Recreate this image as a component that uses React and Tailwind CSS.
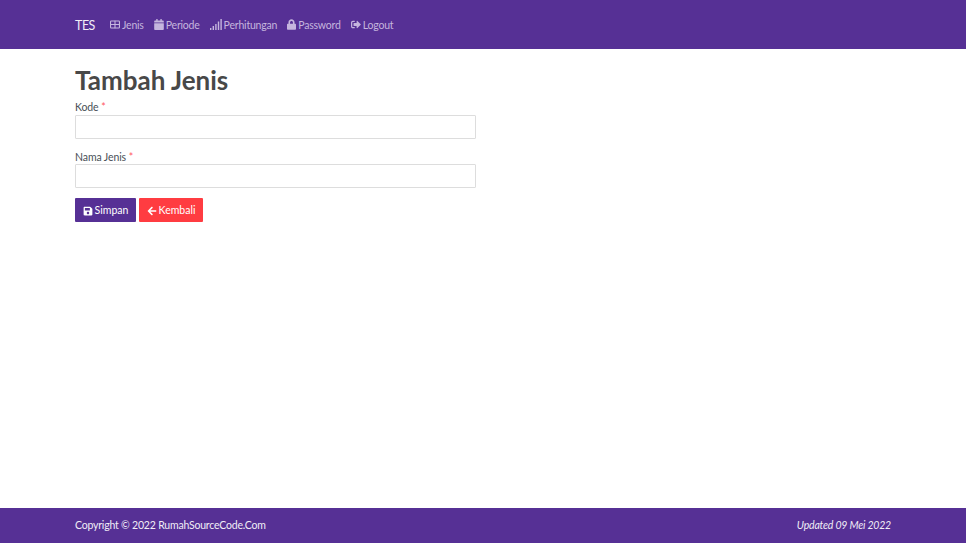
import React from "react";
import { FaCalendar, FaLock, FaSignOutAlt, FaSave, FaArrowLeft } from "react-icons/fa";

const GridIcon = ({ className }) => (
  <svg viewBox="0 0 11 9" className={className} fill="none" stroke="currentColor" strokeWidth="1.2">
    <rect x="0.6" y="0.6" width="9.8" height="7.8" rx="0.8" />
    <path d="M5.5 0.5v8M0.5 4.5h10" />
  </svg>
);

const SignalIcon = ({ className }) => (
  <svg viewBox="0 0 12 11" className={className} fill="currentColor">
    <rect x="0" y="9" width="1.4" height="2" />
    <rect x="2.6" y="7" width="1.4" height="4" />
    <rect x="5.2" y="5" width="1.4" height="6" />
    <rect x="7.8" y="2.5" width="1.4" height="8.5" />
    <rect x="10.4" y="0" width="1.4" height="11" />
  </svg>
);

const menus = [
  { label: "Jenis", icon: GridIcon, size: "w-[10px] h-[9px]" },
  { label: "Periode", icon: FaCalendar, size: "w-[10px] h-[11px]" },
  { label: "Perhitungan", icon: SignalIcon, size: "w-[12px] h-[11px]" },
  { label: "Password", icon: FaLock, size: "w-[9px] h-[11px]" },
  { label: "Logout", icon: FaSignOutAlt, size: "w-[10px] h-[11px]" },
];

const Field = ({ label }) => (
  <div className="mb-[10px]">
    <label className="block h-[15.5px] text-[10.5px] leading-[17px] tracking-[-0.1px] text-[#495057]">
      {label} <span className="text-[#ff5a5f]">*</span>
    </label>
    <input
      type="text"
      className="block w-full h-[24px] bg-white border border-[#dddddd] rounded-[1px] outline-none"
    />
  </div>
);

export default function App() {
  return (
    <div className="h-[543px] flex flex-col bg-white font-['Lato','Open_Sans',sans-serif] overflow-hidden">
      {/* Navbar */}
      <nav className="h-[49px] shrink-0 bg-[#563095] px-[75px] flex items-center">
        <span className="text-[12.5px] leading-[17px] pt-[2px] tracking-[-0.5px] text-[#f1edf7] w-[35px]">TES</span>
        <div className="flex items-center gap-[10px]">
          {menus.map((menu) => (
            <a key={menu.label} className="flex items-center gap-[2px] text-[10.5px] tracking-[-0.2px] text-[#c5b5de]">
              <menu.icon className={menu.size} />
              <span className="leading-[17px] pt-[2px]">{menu.label}</span>
            </a>
          ))}
        </div>
      </nav>

      {/* Konten */}
      <main className="flex-1 px-[75px] pt-[14px]">
        <h1 className="text-[26px] leading-[34px] font-bold text-[#484848] mb-[2px]">Tambah Jenis</h1>
        <form className="w-[401px]">
          <Field label="Kode" />
          <Field label="Nama Jenis" />
          <div className="flex gap-[3px]">
            <button type="button" className="h-[24px] w-[61px] pt-[1px] flex items-center justify-center gap-[2px] bg-[#563095] text-white text-[10.5px] rounded-[1px]">
              <FaSave className="w-[10px] h-[10px]" /> Simpan
            </button>
            <button type="button" className="h-[24px] w-[64px] pt-[1px] flex items-center justify-center gap-[2px] bg-[#ff3c41] text-white text-[10.5px] rounded-[1px]">
              <FaArrowLeft className="w-[10px] h-[10px]" /> Kembali
            </button>
          </div>
        </form>
      </main>

      {/* Footer */}
      <footer className="h-[35px] shrink-0 bg-[#563095] px-[75px] flex items-center justify-between text-[10.5px] tracking-[-0.2px] text-[#f1edf7]">
        <span>Copyright © 2022 RumahSourceCode.Com</span>
        <em>Updated 09 Mei 2022</em>
      </footer>
    </div>
  );
}
